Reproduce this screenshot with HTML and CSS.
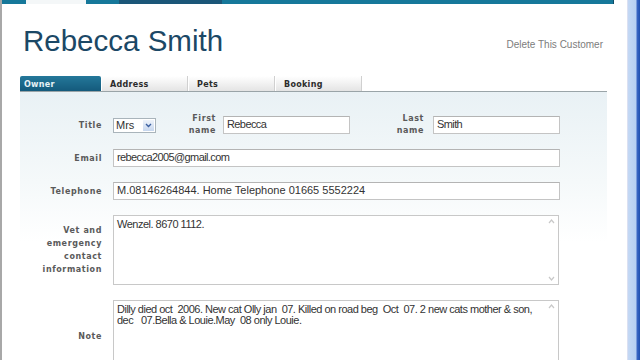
FILE: index.html
```html
<!DOCTYPE html>
<html lang="en">
<head>
  <meta charset="UTF-8" />
  <title>Rebecca Smith</title>
  <link rel="stylesheet" href="styles.css">
</head>
<body>
  <div class="window">
    <div class="page">
      <div class="top-strip">
        <span class="strip-tab light"></span>
        <span class="strip-tab dark"></span>
      </div>

      <div class="header">
        <h1>Rebecca Smith</h1>
        <a class="delete-link">Delete This Customer</a>
      </div>

      <div class="tabs">
        <div class="tab active">Owner</div>
        <div class="tab">Address</div>
        <div class="tab">Pets</div>
        <div class="tab">Booking</div>
      </div>

      <div class="panel">
        <div class="row first-row">
          <label class="label">Title</label>
          <div class="select">Mrs
            <span class="select-btn">
              <svg width="7" height="5" viewBox="0 0 7 5"><path d="M1 1 L3.5 3.5 L6 1" fill="none" stroke="#3b5fa0" stroke-width="1.4"/></svg>
            </span>
          </div>
          <label class="label name-label">First<br>name</label>
          <div class="input short">Rebecca</div>
          <label class="label name-label last">Last<br>name</label>
          <div class="input short">Smith</div>
        </div>

        <div class="row">
          <label class="label">Email</label>
          <div class="input wide tight">rebecca2005@gmail.com</div>
        </div>

        <div class="row">
          <label class="label">Telephone</label>
          <div class="input wide">M.08146264844. Home Telephone 01665 5552224</div>
        </div>

        <div class="row">
          <label class="label">Vet and<br>emergency<br>contact<br>information</label>
          <div class="textarea vet">
            <div class="textarea-text">Wenzel. 8670 1112.</div>
            <div class="scroll">
              <svg width="9" height="9" viewBox="0 0 9 9"><path d="M2 6 L4.5 3 L7 6" fill="none" stroke="#c8c8c8" stroke-width="1.2"/></svg>
              <svg width="9" height="9" viewBox="0 0 9 9"><path d="M2 3 L4.5 6 L7 3" fill="none" stroke="#c8c8c8" stroke-width="1.2"/></svg>
            </div>
          </div>
        </div>

        <div class="row">
          <label class="label">Note</label>
          <div class="textarea note">
            <div class="textarea-text">Dilly died oct&nbsp; 2006. New cat Olly jan&nbsp; 07. Killed on road beg&nbsp; Oct&nbsp; 07. 2 new cats mother &amp; son, dec&nbsp;&nbsp; 07.Bella &amp; Louie.May&nbsp; 08 only Louie.</div>
            <div class="scroll">
              <svg width="9" height="9" viewBox="0 0 9 9"><path d="M2 6 L4.5 3 L7 6" fill="none" stroke="#c8c8c8" stroke-width="1.2"/></svg>
              <svg width="9" height="9" viewBox="0 0 9 9"><path d="M2 3 L4.5 6 L7 3" fill="none" stroke="#c8c8c8" stroke-width="1.2"/></svg>
            </div>
          </div>
        </div>
      </div>
    </div>
    <div class="frame-right"></div>
  </div>
</body>
</html>
```

FILE: styles.css
```css
body {
  margin: 0;
  width: 640px;
  height: 360px;
  overflow: hidden;
  background: #fff;
  font-family: "Liberation Sans", Arial, sans-serif;
}
.window {
  display: flex;
  height: 360px;
}
.page {
  width: 625px;
  border-left: 2px solid #a8a8a8;
  background: #fff;
}
.frame-right {
  width: 13px;
  background: linear-gradient(90deg, #f2e8f0 0, #c4d8f4 1px, #b6cff2 9px, #3a66c4 10px, #1e4fb0 13px);
}

.top-strip {
  height: 4px;
  width: 611px;
  background: #16789a;
  border-right: 1px solid #0e4c66;
  display: flex;
}
.strip-tab { height: 4px; }
.strip-tab.light { margin-left: 24px; width: 60px; background: #f4f7f8; }
.strip-tab.dark { margin-left: 33px; width: 103px; background: #1b5678; }

.header {
  display: flex;
  justify-content: space-between;
  align-items: flex-start;
  padding: 22px 24px 0 21px;
  height: 50px;
}
h1 {
  margin: 0;
  font-size: 29.5px;
  font-weight: normal;
  color: #1b4866;
  line-height: 30px;
}
.delete-link {
  font-size: 10px;
  color: #7c7c7c;
  margin-top: 13px;
}

.tabs {
  display: flex;
  margin-left: 18px;
  width: 587px;
  border-bottom: 1px solid #9aa4a8;
}
.tab {
  width: 86px;
  height: 15px;
  margin-right: 1px;
  padding-left: 8px;
  box-sizing: border-box;
  font-family: "DejaVu Sans", Verdana, sans-serif;
  font-size: 8px;
  font-weight: bold;
  letter-spacing: 0.3px;
  line-height: 17px;
  color: #2c2c2c;
  background: linear-gradient(#ffffff, #e4e4e4);
  border-right: 1px solid #d0d0d0;
}
.tab.active {
  width: 81px;
  padding-left: 4px;
  color: #e8f2f6;
  background: linear-gradient(#24789a, #145a7c);
  border-right: none;
  border-radius: 2px 2px 0 0;
}

.panel {
  margin-left: 18px;
  width: 587px;
  height: 280px;
  padding-top: 24px;
  box-sizing: border-box;
  background: linear-gradient(#e9f1f5 0, #f5f9fa 90px, #ffffff 150px);
  display: flex;
  flex-direction: column;
  gap: 15px;
}
.row {
  display: flex;
  align-items: center;
}
.first-row { height: 18px; }
.label {
  width: 93px;
  flex-shrink: 0;
  text-align: right;
  padding-right: 11px;
  box-sizing: border-box;
  font-family: "DejaVu Sans", Verdana, sans-serif;
  font-size: 8px;
  font-weight: bold;
  letter-spacing: 0.6px;
  line-height: 13px;
  color: #5a5a5a;
}
.name-label {
  padding-right: 7px;
  line-height: 12px;
}
.first-row .name-label { width: 67px; }
.first-row .name-label.last { width: 83px; padding-right: 9px; }

.select {
  width: 43px;
  height: 15px;
  box-sizing: border-box;
  border: 1px solid #a9b4bb;
  background: #fff;
  font-size: 11px;
  color: #333;
  padding-left: 2px;
  line-height: 13px;
  display: flex;
  justify-content: space-between;
}
.select-btn {
  width: 11px;
  height: 11px;
  margin: 1px;
  background: linear-gradient(#eef3fa, #c6d6ee);
  display: flex;
  align-items: center;
  justify-content: center;
}

.input {
  height: 18px;
  box-sizing: border-box;
  border: 1px solid #c4c4c4;
  border-top-color: #b4b4b4;
  background: #fff;
  font-size: 11px;
  color: #333;
  padding-left: 3px;
  line-height: 15px;
}
.input.short { width: 127px; letter-spacing: -0.6px; }
.input.wide { width: 447px; }
.input.tight { letter-spacing: -0.6px; }

.textarea {
  display: flex;
  width: 446px;
  box-sizing: border-box;
  border: 1px solid #c8c8c8;
  background: #fff;
}
.textarea.vet { height: 70px; }
.textarea.note { height: 72px; }
.textarea-text {
  flex: 1;
  padding: 3px 4px 3px 3px;
  font-size: 11px;
  line-height: 11px;
  letter-spacing: -0.5px;
  color: #333;
}
.scroll {
  width: 13px;
  display: flex;
  flex-direction: column;
  justify-content: space-between;
  align-items: center;
  padding: 1px 0;
}
```
